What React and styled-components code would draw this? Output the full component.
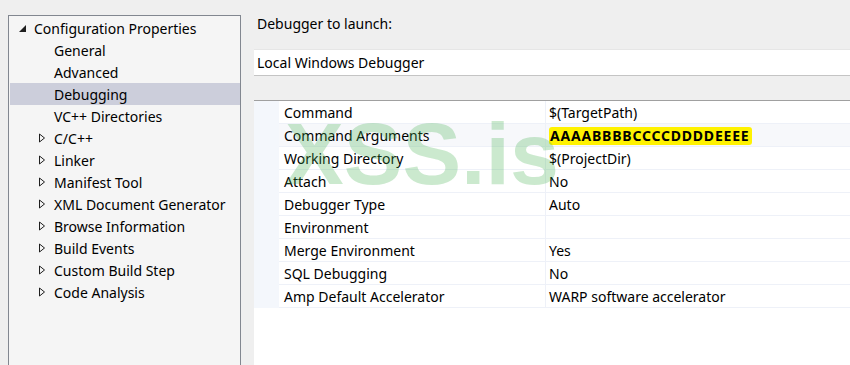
import styled, { createGlobalStyle } from 'styled-components'

const Global = createGlobalStyle`
  body {
    margin: 0;
    background: #efefef;
    font-family: "Noto Sans", "Open Sans", sans-serif;
    font-size: 14px;
    color: #000;
  }
`

const tree = [
  { label: 'Configuration Properties', level: 0, kind: 'open' },
  { label: 'General', level: 1 },
  { label: 'Advanced', level: 1 },
  { label: 'Debugging', level: 1, selected: true },
  { label: 'VC++ Directories', level: 1 },
  { label: 'C/C++', level: 1, kind: 'closed' },
  { label: 'Linker', level: 1, kind: 'closed' },
  { label: 'Manifest Tool', level: 1, kind: 'closed' },
  { label: 'XML Document Generator', level: 1, kind: 'closed' },
  { label: 'Browse Information', level: 1, kind: 'closed' },
  { label: 'Build Events', level: 1, kind: 'closed' },
  { label: 'Custom Build Step', level: 1, kind: 'closed' },
  { label: 'Code Analysis', level: 1, kind: 'closed' },
]

const props = [
  ['Command', '$(TargetPath)'],
  ['Command Arguments', 'AAAABBBBCCCCDDDDEEEE', true],
  ['Working Directory', '$(ProjectDir)'],
  ['Attach', 'No'],
  ['Debugger Type', 'Auto'],
  ['Environment', ''],
  ['Merge Environment', 'Yes'],
  ['SQL Debugging', 'No'],
  ['Amp Default Accelerator', 'WARP software accelerator'],
]

const Expander = ({ kind }) => {
  if (kind === 'open')
    return (
      <svg width="9" height="9" viewBox="0 0 9 9">
        <path d="M8 1 L8 8 L1 8 Z" fill="#1e1e1e" />
      </svg>
    )
  return (
    <svg width="8" height="10" viewBox="0 0 8 10">
      <path d="M1.5 1 L6.5 5 L1.5 9 Z" fill="none" stroke="#1e1e1e" strokeWidth="1" />
    </svg>
  )
}

export default function App() {
  return (
    <Page>
      <Global />
      <TreePanel>
        {tree.map((t) => (
          <TreeRow key={t.label} $selected={t.selected} $level={t.level}>
            <Arrow $level={t.level}>{t.kind && <Expander kind={t.kind} />}</Arrow>
            {t.label}
          </TreeRow>
        ))}
      </TreePanel>
      <Main>
        <Label>Debugger to launch:</Label>
        <Dropdown>Local Windows Debugger</Dropdown>
        <Grid>
          {props.map(([name, value, mark], i) => (
            <PropRow key={name} $tint={i === 1}>
              <Gutter />
              <NameCell>{name}</NameCell>
              <ValueCell>{mark ? <Marked>{value}</Marked> : value}</ValueCell>
            </PropRow>
          ))}
        </Grid>
      </Main>
      <Watermark>XSS.is</Watermark>
    </Page>
  )
}

const Page = styled.div`
  position: relative;
  display: flex;
  height: 365px;
  padding: 15px 0 0 8px;
  box-sizing: border-box;
  overflow: hidden;
`

const TreePanel = styled.div`
  width: 231px;
  flex-shrink: 0;
  background: #f5f5f5;
  border: 1px solid #828790;
  border-bottom: none;
  padding-top: 1px;
`

const TreeRow = styled.div`
  display: flex;
  align-items: center;
  height: 22px;
  margin-left: 1px;
  background: ${(p) => (p.$selected ? '#cccedb' : 'transparent')};
  white-space: nowrap;
`

const Arrow = styled.span`
  display: flex;
  align-items: center;
  justify-content: center;
  width: 10px;
  margin-left: ${(p) => (p.$level === 0 ? 7 : 27)}px;
  margin-right: 7px;
`

const Main = styled.div`
  flex: 1;
  display: flex;
  flex-direction: column;
  margin-left: 13px;
`

const Label = styled.div`
  height: 34px;
  padding-left: 3px;
  line-height: 18px;
`

const Dropdown = styled.div`
  height: 25px;
  line-height: 25px;
  padding-left: 3px;
  background: #fff;
  border-top: 1px solid #e6e6e6;
  border-bottom: 1px solid #c4c4c4;
`

const Grid = styled.div`
  flex: 1;
  margin-top: 24px;
  background: #fff;
  border-top: 1px solid #a0a0a0;
`

const PropRow = styled.div`
  display: grid;
  grid-template-columns: 25px 267px 1fr;
  height: 23px;
  background: ${(p) => (p.$tint ? '#f7f8fb' : '#fff')};
`

const Gutter = styled.div`
  background: #f4f7fc;
`

const NameCell = styled.div`
  display: flex;
  align-items: center;
  padding: 1px 0 0 5px;
  border-bottom: 1px solid #eef1f8;
  border-right: 1px solid #eef1f8;
`

const ValueCell = styled.div`
  display: flex;
  align-items: center;
  padding: 1px 0 0 3px;
  border-bottom: 1px solid #eef1f8;
`

const Marked = styled.span`
  font-weight: 700;
  background: #fff200;
  padding: 0 3px 0 1px;
  line-height: 18px;
  border-radius: 3px;
  letter-spacing: 0.8px;
`

const Watermark = styled.div`
  position: absolute;
  left: 285px;
  top: 110px;
  font-family: "Liberation Sans", Arial, sans-serif;
  font-weight: 700;
  font-size: 88px;
  line-height: 1;
  color: rgba(70, 175, 80, 0.28);
  pointer-events: none;
`
